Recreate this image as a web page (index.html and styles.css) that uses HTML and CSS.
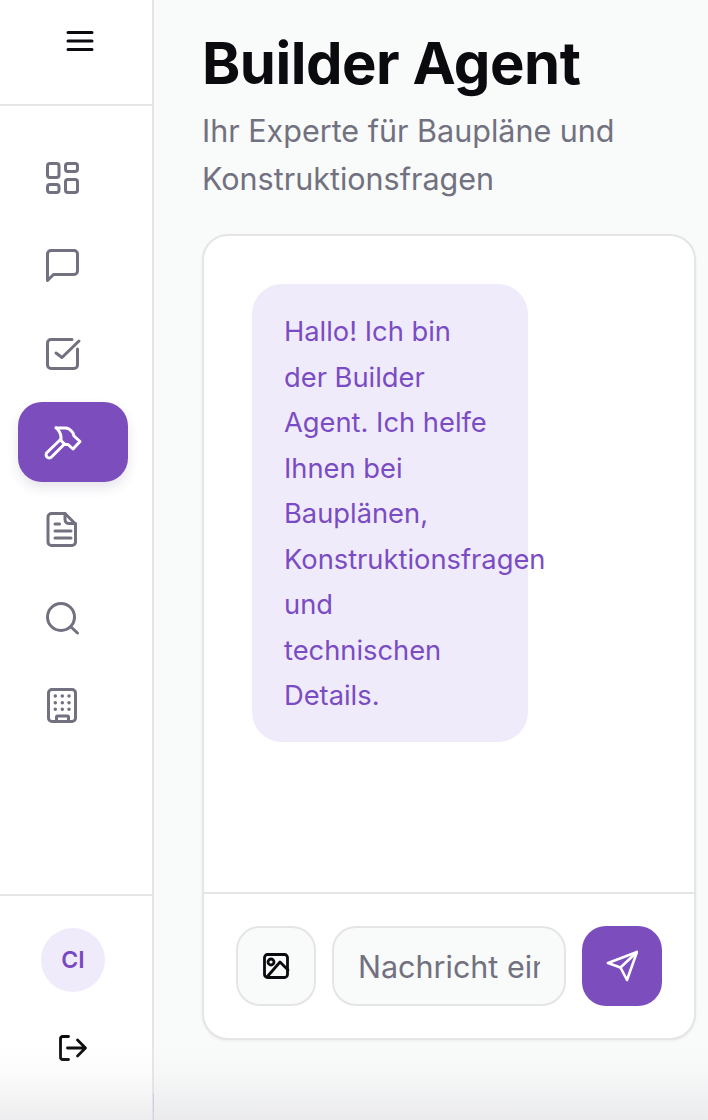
FILE: index.html
```html
<!DOCTYPE html>
<html lang="de">
<head>
    <meta charset="UTF-8">
    <meta name="viewport" content="width=device-width, initial-scale=1.0">
    <title>Builder Agent</title>
    <link rel="stylesheet" href="styles.css">
</head>
<body>
    <aside class="sidebar">
        <div class="sidebar-top">
            <svg class="icon-menu" viewBox="0 0 34 34"><path d="M5 8.500h24M5 17h24M5 25.500h24"/></svg>
        </div>
        <nav class="nav">
            <a class="nav-item"><svg viewBox="0 0 44 44"><rect x="7.500" y="7.500" width="11.500" height="14" rx="2.500"/><rect x="25.500" y="7.500" width="12" height="8" rx="2.500"/><rect x="7.500" y="28.500" width="11.500" height="8" rx="2.500"/><rect x="25.500" y="23.500" width="12" height="13" rx="2.500"/></svg></a>
            <a class="nav-item"><svg viewBox="0 0 44 44"><path d="M7.500 10a3.500 3.500 0 0 1 3.500-3.500h23a3.500 3.500 0 0 1 3.500 3.500v17a3.500 3.500 0 0 1-3.500 3.500H13.500l-6 6z"/></svg></a>
            <a class="nav-item"><svg viewBox="0 0 44 44"><path d="M32 7.500H11A3.500 3.500 0 0 0 7.500 11v22a3.500 3.500 0 0 0 3.500 3.500h23a3.500 3.500 0 0 0 3.500-3.500V17"/><path d="M16 21l6 4.500L39 9"/></svg></a>
            <a class="nav-item active"><svg viewBox="0 0 44 44"><path d="M20.500 19.500L7 32.500a3 3 0 0 0 4.500 4.500L24.500 24"/><path d="M16 8h9c4 0 6 2 8 5l1 3 6 5.500-7 7.500-5-4.500h-3l-4-4v-3c0-4-2-7-5-10z"/></svg></a>
            <a class="nav-item"><svg viewBox="0 0 44 44"><path d="M11.500 5.500H25L35.500 16v18a3.500 3.500 0 0 1-3.500 3.500H11.500A3.500 3.500 0 0 1 8 34V9a3.500 3.500 0 0 1 3.500-3.500z"/><path d="M25 5.500v6a4 4 0 0 0 4 4h6.500"/><path d="M15 16h4.500M15 23h16M15 30h16"/></svg></a>
            <a class="nav-item"><svg viewBox="0 0 44 44"><circle cx="21" cy="21" r="13.500"/><path d="M31 31l6.500 6"/></svg></a>
            <a class="nav-item"><svg viewBox="0 0 44 44"><rect x="8.500" y="5.500" width="27" height="32" rx="3.500"/><path class="dots" d="M15.300 12h.01M22.300 12h.01M29 12h.01M15.300 18.700h.01M22.300 18.700h.01M29 18.700h.01M15.300 25.300h.01M22.300 25.300h.01M29 25.300h.01"/><path d="M16.500 37.500v-4.500a1 1 0 0 1 1-1h10a1 1 0 0 1 1 1v4.500"/></svg></a>
        </nav>
        <div class="sidebar-bottom">
            <div class="avatar">CI</div>
            <svg class="icon-logout" viewBox="1 0 36 36"><path d="M14.500 6.500H9a2.500 2.500 0 0 0-2.500 2.500v18A2.500 2.500 0 0 0 9 29.500h5.500"/><path d="M13.500 18H31M23.500 10l8 8-8 8"/></svg>
        </div>
    </aside>

    <main class="main">
        <h1>Builder Agent</h1>
        <p class="subtitle">Ihr Experte für Baupläne und Konstruktionsfragen</p>
        <section class="chat">
            <div class="messages">
                <div class="bubble">Hallo! Ich bin der Builder Agent. Ich helfe Ihnen bei Bauplänen, Konstruktionsfragen und technischen Details.</div>
            </div>
            <form class="composer">
                <button type="button" class="image-btn"><svg viewBox="0 0 30 30"><rect x="3.500" y="3.500" width="23" height="23" rx="3"/><circle cx="10" cy="11" r="3"/><path d="M6 26L19 11l8 8"/></svg></button>
                <input class="message-input" type="text" placeholder="Nachricht eingeben...">
                <button type="button" class="send-btn"><svg viewBox="0 0 32 32"><path d="M2 13L31 2 21 30l-6.500-12.500z"/><path d="M14.500 17.500L31 2"/></svg></button>
            </form>
        </section>
    </main>
    <div class="page-fade"></div>
</body>
</html>
```

FILE: styles.css
```css
* {
    box-sizing: border-box;
}
body {
    margin: 0;
    width: 708px;
    height: 1120px;
    overflow: hidden;
    display: flex;
    font-family: Inter, sans-serif;
    background-color: #f9fafa;
    position: relative;
}
svg {
    fill: none;
    stroke: currentColor;
    stroke-linecap: round;
    stroke-linejoin: round;
}
.sidebar {
    width: 154px;
    flex-shrink: 0;
    display: flex;
    flex-direction: column;
    position: relative;
    background: white;
    border-right: 2px solid #e5e5e7;
}
/* purple tint at the foot of the divider */
.sidebar::after {
    content: "";
    position: absolute;
    right: -2px;
    bottom: 0;
    width: 1px;
    height: 27px;
    background-color: #cbbce8;
}
.sidebar-top {
    height: 106px;
    display: flex;
    align-items: center;
    justify-content: center;
    padding-bottom: 22px;
    padding-left: 8px;
    border-bottom: 2px solid #e5e5e7;
    color: #0a0a0f;
}
.icon-menu {
    width: 34px;
    height: 34px;
    stroke-width: 3;
}
.nav {
    flex: 1;
    padding: 32px 24px 0 18px;
    display: flex;
    flex-direction: column;
    gap: 8px;
}
.nav-item {
    height: 80px;
    padding-left: 22px;
    display: flex;
    align-items: center;
    color: #71717f;
    border-radius: 24px;
}
.nav-item svg {
    width: 44px;
    height: 44px;
    stroke-width: 3;
}
.nav-item .dots {
    stroke-width: 3.500;
}
.nav-item.active {
    background-color: #7c4dbd;
    color: white;
    box-shadow: 0 6px 12px rgba(60, 40, 90, 0.12);
}
.sidebar-bottom {
    height: 226px;
    padding-top: 32px;
    padding-right: 6px;
    border-top: 2px solid #e5e5e7;
    display: flex;
    flex-direction: column;
    align-items: center;
}
.avatar {
    width: 64px;
    height: 64px;
    border-radius: 50%;
    background-color: #f0ebfa;
    color: #7748c2;
    font-size: 23px;
    font-weight: 600;
    display: flex;
    align-items: center;
    justify-content: center;
}
.icon-logout {
    width: 36px;
    height: 36px;
    margin-top: 38px;
    stroke-width: 2.800;
    color: #0a0a0f;
}
.main {
    flex: 1;
    min-width: 0;
    padding: 30px 12px 80px 48px;
    display: flex;
    flex-direction: column;
}
h1 {
    margin: 0;
    font-size: 58px;
    line-height: 66px;
    font-weight: 700;
    letter-spacing: -0.500px;
    color: #0a0a0f;
}
.subtitle {
    margin: 11px 0 31px;
    font-size: 30.500px;
    line-height: 48px;
    color: #71717f;
}
.chat {
    flex: 1;
    display: flex;
    flex-direction: column;
    background: white;
    border: 2px solid #e5e5e7;
    border-radius: 26px;
    box-shadow: 0 1px 3px rgba(0, 0, 0, 0.06);
}
.messages {
    flex: 1;
    padding: 48px;
}
.bubble {
    width: 276px;
    padding: 25px 38px 23px 32px;
    font-size: 27.300px;
    line-height: 45.500px;
    color: #7a4cc4;
    background-color: #f0ebfa;
    border-radius: 30px;
}
.composer {
    height: 146px;
    padding: 32px;
    border-top: 2px solid #e5e5e7;
    display: flex;
    gap: 16px;
}
.image-btn {
    width: 80px;
    height: 80px;
    flex-shrink: 0;
    padding: 0;
    display: flex;
    align-items: center;
    justify-content: center;
    background-color: #f9fafa;
    border: 2px solid #e5e5e7;
    border-radius: 24px;
    color: #0a0a0f;
}
.image-btn svg {
    width: 30px;
    height: 30px;
    stroke-width: 2.800;
}
.message-input {
    flex: 1;
    min-width: 0;
    height: 80px;
    padding: 0 24px;
    font-family: Inter, sans-serif;
    font-size: 30.500px;
    background-color: #f9fafa;
    border: 2px solid #e5e5e7;
    border-radius: 24px;
}
.message-input::placeholder {
    color: #71717f;
    opacity: 1;
}
.send-btn {
    width: 80px;
    height: 80px;
    flex-shrink: 0;
    padding: 0;
    display: flex;
    align-items: center;
    justify-content: center;
    background-color: #7c4dbd;
    border: none;
    border-radius: 24px;
    color: white;
}
.send-btn svg {
    width: 32px;
    height: 32px;
    stroke-width: 2.600;
}
.page-fade {
    position: absolute;
    left: 0;
    right: 0;
    bottom: 0;
    height: 80px;
    background: linear-gradient(rgba(225, 225, 228, 0), rgba(225, 225, 228, 0.1) 40%, rgba(225, 225, 228, 0.6));
    pointer-events: none;
}
```
